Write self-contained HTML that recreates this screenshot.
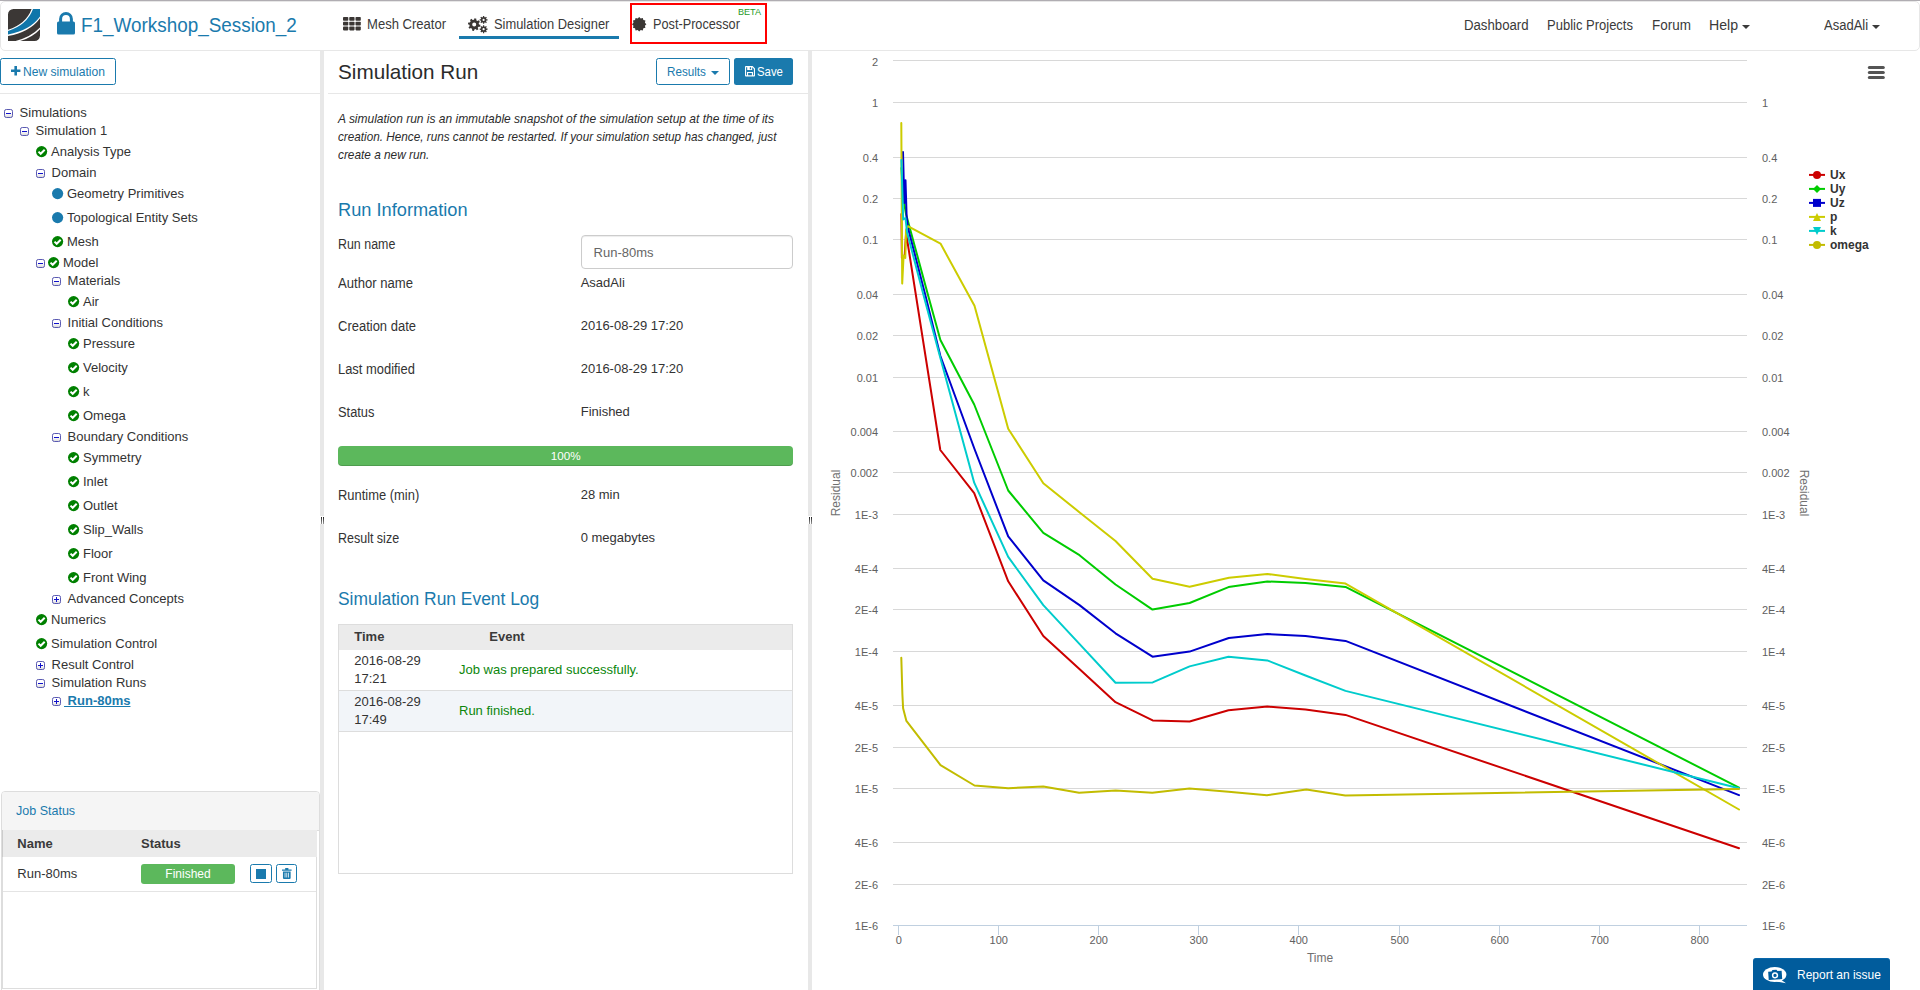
<!DOCTYPE html>
<html><head><meta charset="utf-8"><title>SimScale</title><style>
*{box-sizing:border-box;margin:0;padding:0}
html,body{width:1920px;height:990px;overflow:hidden;background:#fff}
body{font-family:"Liberation Sans",sans-serif;font-size:13px;color:#333;position:relative}
.t{position:absolute;white-space:nowrap;display:block}
.b{position:absolute}
svg{position:absolute;overflow:visible}
</style></head><body>
<div class="b" style="left:0px;top:0px;width:1920px;height:1px;background:#b0adb2"></div>
<div class="b" style="left:0px;top:1px;width:1920px;height:50px;border:1px solid #e7e7e7;border-radius:5px;background:#fff"></div>
<svg style="left:8px;top:9px" width="32" height="32" viewBox="0 0 32 32">
<defs><clipPath id="lg"><path d="M5.5,0 H32 V26.5 A5.5,5.5 0 0 1 26.5,32 H0 V5.5 A5.5,5.5 0 0 1 5.5,0 Z"/></clipPath></defs>
<g clip-path="url(#lg)"><rect width="32" height="32" fill="#3b3735"/>
<path d="M23.6,0 L32,0 L32,9.2 Q22,23 0,27 L0,20.8 Q18,15 23.6,0 Z" fill="#fff"/>
<path d="M25,0 L32,0 L32,7.6 Q22,21.5 0,25.6 L0,22 Q19,16 25,0 Z" fill="#0f76aa"/>
<path d="M32,18.6 Q22,29 5,32.6 L10,32.6 Q24,29 32,20.2 Z" fill="#fff"/>
</g></svg>
<svg style="left:57px;top:11.5px" width="18" height="22.5" viewBox="0 0 18 22.5">
<path d="M3.6,10 V7 a5.4,5.4 0 0 1 10.8,0 V10" fill="none" stroke="#1a7aad" stroke-width="3"/>
<rect x="0" y="9.6" width="18" height="12.9" rx="1.6" fill="#1a7aad"/></svg>
<span id="t1" class="t " style="left:81.3045px;top:11.7px;font-size:20px;line-height:26px;color:#1a7aad;transform:scaleX(0.9440);transform-origin:0 50%;">F1_Workshop_Session_2</span>
<svg style="left:342.5px;top:17.3px" width="18" height="14" viewBox="0 0 18 14"><rect x="0" y="0" width="5.3" height="3.8" rx="0.8" fill="#3b3735"/><rect x="6.25" y="0" width="5.3" height="3.8" rx="0.8" fill="#3b3735"/><rect x="12.5" y="0" width="5.3" height="3.8" rx="0.8" fill="#3b3735"/><rect x="0" y="4.8" width="5.3" height="3.8" rx="0.8" fill="#3b3735"/><rect x="6.25" y="4.8" width="5.3" height="3.8" rx="0.8" fill="#3b3735"/><rect x="12.5" y="4.8" width="5.3" height="3.8" rx="0.8" fill="#3b3735"/><rect x="0" y="9.6" width="5.3" height="3.8" rx="0.8" fill="#3b3735"/><rect x="6.25" y="9.6" width="5.3" height="3.8" rx="0.8" fill="#3b3735"/><rect x="12.5" y="9.6" width="5.3" height="3.8" rx="0.8" fill="#3b3735"/></svg>
<span id="t2" class="t " style="left:366.852px;top:14.1px;font-size:14px;line-height:20px;color:#3a3a3a;transform:scaleX(0.9327);transform-origin:0 50%;">Mesh Creator</span>
<svg style="left:468px;top:16px" width="20" height="17" viewBox="0 0 20 17"><path d="M11.00,8.43 L12.49,8.87 L12.10,10.80 L10.55,10.63 L9.71,11.87 L10.46,13.24 L8.82,14.33 L7.84,13.11 L6.37,13.40 L5.93,14.89 L4.00,14.50 L4.17,12.95 L2.93,12.11 L1.56,12.86 L0.47,11.22 L1.69,10.24 L1.40,8.77 L-0.09,8.33 L0.30,6.40 L1.85,6.57 L2.69,5.33 L1.94,3.96 L3.58,2.87 L4.56,4.09 L6.03,3.80 L6.47,2.31 L8.40,2.70 L8.23,4.25 L9.47,5.09 L10.84,4.34 L11.93,5.98 L10.71,6.96 Z M4.20,8.60 a2.00,2.00 0 1 0 4.00,0 a2.00,2.00 0 1 0 -4.00,0 Z" fill="#3b3735" fill-rule="evenodd"/><path d="M18.42,3.22 L19.55,3.27 L19.55,4.53 L18.42,4.58 L18.07,5.42 L18.84,6.25 L17.95,7.14 L17.12,6.37 L16.28,6.72 L16.23,7.85 L14.97,7.85 L14.92,6.72 L14.08,6.37 L13.25,7.14 L12.36,6.25 L13.13,5.42 L12.78,4.58 L11.65,4.53 L11.65,3.27 L12.78,3.22 L13.13,2.38 L12.36,1.55 L13.25,0.66 L14.08,1.43 L14.92,1.08 L14.97,-0.05 L16.23,-0.05 L16.28,1.08 L17.12,1.43 L17.95,0.66 L18.84,1.55 L18.07,2.38 Z M14.50,3.90 a1.10,1.10 0 1 0 2.20,0 a1.10,1.10 0 1 0 -2.20,0 Z" fill="#3b3735" fill-rule="evenodd"/><path d="M18.42,12.52 L19.55,12.57 L19.55,13.83 L18.42,13.88 L18.07,14.72 L18.84,15.55 L17.95,16.44 L17.12,15.67 L16.28,16.02 L16.23,17.15 L14.97,17.15 L14.92,16.02 L14.08,15.67 L13.25,16.44 L12.36,15.55 L13.13,14.72 L12.78,13.88 L11.65,13.83 L11.65,12.57 L12.78,12.52 L13.13,11.68 L12.36,10.85 L13.25,9.96 L14.08,10.73 L14.92,10.38 L14.97,9.25 L16.23,9.25 L16.28,10.38 L17.12,10.73 L17.95,9.96 L18.84,10.85 L18.07,11.68 Z M14.50,13.20 a1.10,1.10 0 1 0 2.20,0 a1.10,1.10 0 1 0 -2.20,0 Z" fill="#3b3735" fill-rule="evenodd"/></svg>
<span id="t3" class="t " style="left:493.767px;top:14.1px;font-size:14px;line-height:20px;color:#3a3a3a;transform:scaleX(0.9208);transform-origin:0 50%;">Simulation Designer</span>
<div class="b" style="left:459px;top:36px;width:160px;height:3px;background:#1a7aad"></div>
<div class="b" style="left:630px;top:3px;width:137px;height:41px;border:2px solid #ff0000"></div>
<svg style="left:632.2px;top:17.4px" width="14.4" height="14.4" viewBox="0 0 14.4 14.4"><polygon points="14.40,7.20 12.90,8.73 13.44,10.80 11.37,11.37 10.80,13.44 8.73,12.90 7.20,14.40 5.67,12.90 3.60,13.44 3.03,11.37 0.96,10.80 1.50,8.73 0.00,7.20 1.50,5.67 0.96,3.60 3.03,3.03 3.60,0.96 5.67,1.50 7.20,0.00 8.73,1.50 10.80,0.96 11.37,3.03 13.44,3.60 12.90,5.67" fill="#3b3735"/></svg>
<span id="t4" class="t " style="left:653.38px;top:14.1px;font-size:14px;line-height:20px;color:#3a3a3a;transform:scaleX(0.9078);transform-origin:0 50%;">Post-Processor</span>
<span id="t5" class="t " style="left:737.931px;top:5.7px;font-size:9px;line-height:12px;color:#1f9a1f;transform:scaleX(1.0094);transform-origin:0 50%;">BETA</span>
<span id="t6" class="t " style="left:1463.94px;top:15px;font-size:14px;line-height:20px;color:#3a3a3a;transform:scaleX(0.9429);transform-origin:0 50%;">Dashboard</span>
<span id="t7" class="t " style="left:1547.16px;top:15px;font-size:14px;line-height:20px;color:#3a3a3a;transform:scaleX(0.9284);transform-origin:0 50%;">Public Projects</span>
<span id="t8" class="t " style="left:1651.72px;top:15px;font-size:14px;line-height:20px;color:#3a3a3a;transform:scaleX(0.9621);transform-origin:0 50%;">Forum</span>
<span id="t9" class="t " style="left:1709.16px;top:15px;font-size:14px;line-height:20px;color:#3a3a3a;transform:scaleX(1.0108);transform-origin:0 50%;">Help</span>
<svg style="left:1742px;top:25px" width="8" height="4"><path d="M0,0 H8 L4,4 Z" fill="#3a3a3a"/></svg>
<span id="t10" class="t " style="left:1823.85px;top:15px;font-size:14px;line-height:20px;color:#3a3a3a;transform:scaleX(0.9294);transform-origin:0 50%;">AsadAli</span>
<svg style="left:1872.4px;top:25px" width="8" height="4"><path d="M0,0 H8 L4,4 Z" fill="#3a3a3a"/></svg>
<div class="b" style="left:320px;top:51px;width:4px;height:939px;background:#e8e8e8"></div>
<div class="b" style="left:808px;top:51px;width:4px;height:939px;background:#e8e8e8"></div>
<div class="b" style="left:320px;top:516px;width:4px;height:8px;background:#fff"></div>
<div class="b" style="left:321px;top:517px;width:1px;height:7px;background:linear-gradient(#222,#999)"></div>
<div class="b" style="left:323px;top:517px;width:1px;height:7px;background:linear-gradient(#222,#999)"></div>
<div class="b" style="left:808px;top:516px;width:4px;height:8px;background:#fff"></div>
<div class="b" style="left:809px;top:517px;width:1px;height:7px;background:linear-gradient(#222,#999)"></div>
<div class="b" style="left:811px;top:517px;width:1px;height:7px;background:linear-gradient(#222,#999)"></div>
<div class="b" style="left:0px;top:93px;width:320px;height:1px;background:#e7e7e7"></div>
<div class="b" style="left:0px;top:58px;width:116px;height:27px;border:1px solid #1a7aad;border-radius:2.5px;background:#fff"></div>
<svg style="left:11px;top:66.4px" width="9.4" height="9.4"><path d="M3.4,0 H6 V3.4 H9.4 V6 H6 V9.4 H3.4 V6 H0 V3.4 H3.4 Z" fill="#1a7aad"/></svg>
<span id="t11" class="t " style="left:22.684px;top:62.8px;font-size:13px;line-height:18px;color:#1a7aad;transform:scaleX(0.9302);transform-origin:0 50%;">New simulation</span>
<svg style="left:4px;top:109px" width="9" height="9" viewBox="0 0 9 9"><defs><linearGradient id="tg" x1="0" y1="0" x2="0" y2="1"><stop offset="0.45" stop-color="#fff"/><stop offset="1" stop-color="#d8d8d8"/></linearGradient></defs><rect x="0.5" y="0.5" width="8" height="8" rx="1.8" fill="url(#tg)" stroke="#5a5ab2" stroke-width="1"/><rect x="2" y="4" width="5" height="1" fill="#1010cc"/></svg>
<span id="t12" class="t " style="left:19.6px;top:103.5px;font-size:13px;line-height:18px;color:#333;">Simulations</span>
<svg style="left:20px;top:127px" width="9" height="9" viewBox="0 0 9 9"><defs><linearGradient id="tg" x1="0" y1="0" x2="0" y2="1"><stop offset="0.45" stop-color="#fff"/><stop offset="1" stop-color="#d8d8d8"/></linearGradient></defs><rect x="0.5" y="0.5" width="8" height="8" rx="1.8" fill="url(#tg)" stroke="#5a5ab2" stroke-width="1"/><rect x="2" y="4" width="5" height="1" fill="#1010cc"/></svg>
<span id="t13" class="t " style="left:35.6px;top:121.5px;font-size:13px;line-height:18px;color:#333;">Simulation 1</span>
<svg style="left:36px;top:145.7px" width="11.2" height="11.2" viewBox="0 0 11.2 11.2"><circle cx="5.6" cy="5.6" r="5.6" fill="#008000"/><path d="M2.5,5.6 L4.7,7.8 L8.7,3.8" fill="none" stroke="#fff" stroke-width="2"/></svg>
<span id="t14" class="t " style="left:51px;top:142.5px;font-size:13px;line-height:18px;color:#333;">Analysis Type</span>
<svg style="left:36px;top:169px" width="9" height="9" viewBox="0 0 9 9"><defs><linearGradient id="tg" x1="0" y1="0" x2="0" y2="1"><stop offset="0.45" stop-color="#fff"/><stop offset="1" stop-color="#d8d8d8"/></linearGradient></defs><rect x="0.5" y="0.5" width="8" height="8" rx="1.8" fill="url(#tg)" stroke="#5a5ab2" stroke-width="1"/><rect x="2" y="4" width="5" height="1" fill="#1010cc"/></svg>
<span id="t15" class="t " style="left:51.6px;top:163.5px;font-size:13px;line-height:18px;color:#333;">Domain</span>
<svg style="left:52px;top:187.7px" width="11.2" height="11.2"><circle cx="5.6" cy="5.6" r="5.6" fill="#1a7aad"/></svg>
<span id="t16" class="t " style="left:67px;top:184.5px;font-size:13px;line-height:18px;color:#333;">Geometry Primitives</span>
<svg style="left:52px;top:211.7px" width="11.2" height="11.2"><circle cx="5.6" cy="5.6" r="5.6" fill="#1a7aad"/></svg>
<span id="t17" class="t " style="left:67px;top:208.5px;font-size:13px;line-height:18px;color:#333;">Topological Entity Sets</span>
<svg style="left:52px;top:235.7px" width="11.2" height="11.2" viewBox="0 0 11.2 11.2"><circle cx="5.6" cy="5.6" r="5.6" fill="#008000"/><path d="M2.5,5.6 L4.7,7.8 L8.7,3.8" fill="none" stroke="#fff" stroke-width="2"/></svg>
<span id="t18" class="t " style="left:67px;top:232.5px;font-size:13px;line-height:18px;color:#333;">Mesh</span>
<svg style="left:36px;top:259px" width="9" height="9" viewBox="0 0 9 9"><defs><linearGradient id="tg" x1="0" y1="0" x2="0" y2="1"><stop offset="0.45" stop-color="#fff"/><stop offset="1" stop-color="#d8d8d8"/></linearGradient></defs><rect x="0.5" y="0.5" width="8" height="8" rx="1.8" fill="url(#tg)" stroke="#5a5ab2" stroke-width="1"/><rect x="2" y="4" width="5" height="1" fill="#1010cc"/></svg>
<svg style="left:48px;top:256.7px" width="11.2" height="11.2" viewBox="0 0 11.2 11.2"><circle cx="5.6" cy="5.6" r="5.6" fill="#008000"/><path d="M2.5,5.6 L4.7,7.8 L8.7,3.8" fill="none" stroke="#fff" stroke-width="2"/></svg>
<span id="t19" class="t " style="left:63px;top:253.5px;font-size:13px;line-height:18px;color:#333;">Model</span>
<svg style="left:52px;top:277px" width="9" height="9" viewBox="0 0 9 9"><defs><linearGradient id="tg" x1="0" y1="0" x2="0" y2="1"><stop offset="0.45" stop-color="#fff"/><stop offset="1" stop-color="#d8d8d8"/></linearGradient></defs><rect x="0.5" y="0.5" width="8" height="8" rx="1.8" fill="url(#tg)" stroke="#5a5ab2" stroke-width="1"/><rect x="2" y="4" width="5" height="1" fill="#1010cc"/></svg>
<span id="t20" class="t " style="left:67.6px;top:271.5px;font-size:13px;line-height:18px;color:#333;">Materials</span>
<svg style="left:68px;top:295.7px" width="11.2" height="11.2" viewBox="0 0 11.2 11.2"><circle cx="5.6" cy="5.6" r="5.6" fill="#008000"/><path d="M2.5,5.6 L4.7,7.8 L8.7,3.8" fill="none" stroke="#fff" stroke-width="2"/></svg>
<span id="t21" class="t " style="left:83px;top:292.5px;font-size:13px;line-height:18px;color:#333;">Air</span>
<svg style="left:52px;top:319px" width="9" height="9" viewBox="0 0 9 9"><defs><linearGradient id="tg" x1="0" y1="0" x2="0" y2="1"><stop offset="0.45" stop-color="#fff"/><stop offset="1" stop-color="#d8d8d8"/></linearGradient></defs><rect x="0.5" y="0.5" width="8" height="8" rx="1.8" fill="url(#tg)" stroke="#5a5ab2" stroke-width="1"/><rect x="2" y="4" width="5" height="1" fill="#1010cc"/></svg>
<span id="t22" class="t " style="left:67.6px;top:313.5px;font-size:13px;line-height:18px;color:#333;">Initial Conditions</span>
<svg style="left:68px;top:337.7px" width="11.2" height="11.2" viewBox="0 0 11.2 11.2"><circle cx="5.6" cy="5.6" r="5.6" fill="#008000"/><path d="M2.5,5.6 L4.7,7.8 L8.7,3.8" fill="none" stroke="#fff" stroke-width="2"/></svg>
<span id="t23" class="t " style="left:83px;top:334.5px;font-size:13px;line-height:18px;color:#333;">Pressure</span>
<svg style="left:68px;top:361.7px" width="11.2" height="11.2" viewBox="0 0 11.2 11.2"><circle cx="5.6" cy="5.6" r="5.6" fill="#008000"/><path d="M2.5,5.6 L4.7,7.8 L8.7,3.8" fill="none" stroke="#fff" stroke-width="2"/></svg>
<span id="t24" class="t " style="left:83px;top:358.5px;font-size:13px;line-height:18px;color:#333;">Velocity</span>
<svg style="left:68px;top:385.7px" width="11.2" height="11.2" viewBox="0 0 11.2 11.2"><circle cx="5.6" cy="5.6" r="5.6" fill="#008000"/><path d="M2.5,5.6 L4.7,7.8 L8.7,3.8" fill="none" stroke="#fff" stroke-width="2"/></svg>
<span id="t25" class="t " style="left:83px;top:382.5px;font-size:13px;line-height:18px;color:#333;">k</span>
<svg style="left:68px;top:409.7px" width="11.2" height="11.2" viewBox="0 0 11.2 11.2"><circle cx="5.6" cy="5.6" r="5.6" fill="#008000"/><path d="M2.5,5.6 L4.7,7.8 L8.7,3.8" fill="none" stroke="#fff" stroke-width="2"/></svg>
<span id="t26" class="t " style="left:83px;top:406.5px;font-size:13px;line-height:18px;color:#333;">Omega</span>
<svg style="left:52px;top:433px" width="9" height="9" viewBox="0 0 9 9"><defs><linearGradient id="tg" x1="0" y1="0" x2="0" y2="1"><stop offset="0.45" stop-color="#fff"/><stop offset="1" stop-color="#d8d8d8"/></linearGradient></defs><rect x="0.5" y="0.5" width="8" height="8" rx="1.8" fill="url(#tg)" stroke="#5a5ab2" stroke-width="1"/><rect x="2" y="4" width="5" height="1" fill="#1010cc"/></svg>
<span id="t27" class="t " style="left:67.6px;top:427.5px;font-size:13px;line-height:18px;color:#333;">Boundary Conditions</span>
<svg style="left:68px;top:451.7px" width="11.2" height="11.2" viewBox="0 0 11.2 11.2"><circle cx="5.6" cy="5.6" r="5.6" fill="#008000"/><path d="M2.5,5.6 L4.7,7.8 L8.7,3.8" fill="none" stroke="#fff" stroke-width="2"/></svg>
<span id="t28" class="t " style="left:83px;top:448.5px;font-size:13px;line-height:18px;color:#333;">Symmetry</span>
<svg style="left:68px;top:475.7px" width="11.2" height="11.2" viewBox="0 0 11.2 11.2"><circle cx="5.6" cy="5.6" r="5.6" fill="#008000"/><path d="M2.5,5.6 L4.7,7.8 L8.7,3.8" fill="none" stroke="#fff" stroke-width="2"/></svg>
<span id="t29" class="t " style="left:83px;top:472.5px;font-size:13px;line-height:18px;color:#333;">Inlet</span>
<svg style="left:68px;top:499.7px" width="11.2" height="11.2" viewBox="0 0 11.2 11.2"><circle cx="5.6" cy="5.6" r="5.6" fill="#008000"/><path d="M2.5,5.6 L4.7,7.8 L8.7,3.8" fill="none" stroke="#fff" stroke-width="2"/></svg>
<span id="t30" class="t " style="left:83px;top:496.5px;font-size:13px;line-height:18px;color:#333;">Outlet</span>
<svg style="left:68px;top:523.7px" width="11.2" height="11.2" viewBox="0 0 11.2 11.2"><circle cx="5.6" cy="5.6" r="5.6" fill="#008000"/><path d="M2.5,5.6 L4.7,7.8 L8.7,3.8" fill="none" stroke="#fff" stroke-width="2"/></svg>
<span id="t31" class="t " style="left:83px;top:520.5px;font-size:13px;line-height:18px;color:#333;">Slip_Walls</span>
<svg style="left:68px;top:547.7px" width="11.2" height="11.2" viewBox="0 0 11.2 11.2"><circle cx="5.6" cy="5.6" r="5.6" fill="#008000"/><path d="M2.5,5.6 L4.7,7.8 L8.7,3.8" fill="none" stroke="#fff" stroke-width="2"/></svg>
<span id="t32" class="t " style="left:83px;top:544.5px;font-size:13px;line-height:18px;color:#333;">Floor</span>
<svg style="left:68px;top:571.7px" width="11.2" height="11.2" viewBox="0 0 11.2 11.2"><circle cx="5.6" cy="5.6" r="5.6" fill="#008000"/><path d="M2.5,5.6 L4.7,7.8 L8.7,3.8" fill="none" stroke="#fff" stroke-width="2"/></svg>
<span id="t33" class="t " style="left:83px;top:568.5px;font-size:13px;line-height:18px;color:#333;">Front Wing</span>
<svg style="left:52px;top:595px" width="9" height="9" viewBox="0 0 9 9"><defs><linearGradient id="tg" x1="0" y1="0" x2="0" y2="1"><stop offset="0.45" stop-color="#fff"/><stop offset="1" stop-color="#d8d8d8"/></linearGradient></defs><rect x="0.5" y="0.5" width="8" height="8" rx="1.8" fill="url(#tg)" stroke="#5a5ab2" stroke-width="1"/><rect x="2" y="4" width="5" height="1" fill="#1010cc"/><rect x="4" y="2" width="1" height="5" fill="#1010cc"/></svg>
<span id="t34" class="t " style="left:67.6px;top:589.5px;font-size:13px;line-height:18px;color:#333;">Advanced Concepts</span>
<svg style="left:36px;top:613.7px" width="11.2" height="11.2" viewBox="0 0 11.2 11.2"><circle cx="5.6" cy="5.6" r="5.6" fill="#008000"/><path d="M2.5,5.6 L4.7,7.8 L8.7,3.8" fill="none" stroke="#fff" stroke-width="2"/></svg>
<span id="t35" class="t " style="left:51px;top:610.5px;font-size:13px;line-height:18px;color:#333;">Numerics</span>
<svg style="left:36px;top:637.7px" width="11.2" height="11.2" viewBox="0 0 11.2 11.2"><circle cx="5.6" cy="5.6" r="5.6" fill="#008000"/><path d="M2.5,5.6 L4.7,7.8 L8.7,3.8" fill="none" stroke="#fff" stroke-width="2"/></svg>
<span id="t36" class="t " style="left:51px;top:634.5px;font-size:13px;line-height:18px;color:#333;">Simulation Control</span>
<svg style="left:36px;top:661px" width="9" height="9" viewBox="0 0 9 9"><defs><linearGradient id="tg" x1="0" y1="0" x2="0" y2="1"><stop offset="0.45" stop-color="#fff"/><stop offset="1" stop-color="#d8d8d8"/></linearGradient></defs><rect x="0.5" y="0.5" width="8" height="8" rx="1.8" fill="url(#tg)" stroke="#5a5ab2" stroke-width="1"/><rect x="2" y="4" width="5" height="1" fill="#1010cc"/><rect x="4" y="2" width="1" height="5" fill="#1010cc"/></svg>
<span id="t37" class="t " style="left:51.6px;top:655.5px;font-size:13px;line-height:18px;color:#333;">Result Control</span>
<svg style="left:36px;top:679px" width="9" height="9" viewBox="0 0 9 9"><defs><linearGradient id="tg" x1="0" y1="0" x2="0" y2="1"><stop offset="0.45" stop-color="#fff"/><stop offset="1" stop-color="#d8d8d8"/></linearGradient></defs><rect x="0.5" y="0.5" width="8" height="8" rx="1.8" fill="url(#tg)" stroke="#5a5ab2" stroke-width="1"/><rect x="2" y="4" width="5" height="1" fill="#1010cc"/></svg>
<span id="t38" class="t " style="left:51.6px;top:673.5px;font-size:13px;line-height:18px;color:#333;">Simulation Runs</span>
<svg style="left:52px;top:697px" width="9" height="9" viewBox="0 0 9 9"><defs><linearGradient id="tg" x1="0" y1="0" x2="0" y2="1"><stop offset="0.45" stop-color="#fff"/><stop offset="1" stop-color="#d8d8d8"/></linearGradient></defs><rect x="0.5" y="0.5" width="8" height="8" rx="1.8" fill="url(#tg)" stroke="#5a5ab2" stroke-width="1"/><rect x="2" y="4" width="5" height="1" fill="#1010cc"/><rect x="4" y="2" width="1" height="5" fill="#1010cc"/></svg>
<span id="t39" class="t " style="left:64px;top:691.5px;font-size:13px;line-height:18px;color:#1a7aad;font-weight:bold;text-decoration:underline;">&nbsp;Run-80ms</span>
<div class="b" style="left:1px;top:791px;width:318.5px;height:200px;border:1px solid #ddd;border-radius:4px 4px 0 0;background:#fff"></div>
<div class="b" style="left:2px;top:792px;width:316.5px;height:38.5px;background:#f5f5f5;border-radius:3px 3px 0 0;border-bottom:1px solid #ddd"></div>
<span id="t40" class="t " style="left:16.3584px;top:802.1px;font-size:13px;line-height:18px;color:#1a7aad;transform:scaleX(0.9626);transform-origin:0 50%;">Job Status</span>
<div class="b" style="left:2px;top:830px;width:315px;height:159px;border:1px solid #ddd;border-top:none;background:#fff"></div>
<div class="b" style="left:2px;top:830px;width:315px;height:27px;background:#ebebeb;border-left:1px solid #ccc"></div>
<span id="t41" class="t " style="left:17.3px;top:834.7px;font-size:13px;line-height:18px;color:#3a3a3a;font-weight:bold;">Name</span>
<span id="t42" class="t " style="left:141px;top:834.7px;font-size:13px;line-height:18px;color:#3a3a3a;font-weight:bold;">Status</span>
<span id="t43" class="t " style="left:17.3px;top:864.6px;font-size:13px;line-height:18px;color:#333;">Run-80ms</span>
<div class="b" style="left:3px;top:891px;width:313px;height:1px;background:#e4e4e4"></div>
<div class="b" style="left:141px;top:864px;width:94px;height:20px;background:#5cb85c;border-radius:3px"></div>
<span id="t44" class="t " style="left:188px;transform:translateX(-50%);top:866px;font-size:12px;line-height:16px;color:#fff;">Finished</span>
<div class="b" style="left:250px;top:864px;width:22px;height:19px;border:1px solid #1a7aad;border-radius:2.5px;background:#fff"></div>
<div class="b" style="left:256px;top:868.8px;width:10.2px;height:10px;background:#1a7aad"></div>
<div class="b" style="left:276px;top:864px;width:21px;height:19px;border:1px solid #1a7aad;border-radius:2.5px;background:#fff"></div>
<svg style="left:282.1px;top:868px" width="9.6" height="11" viewBox="0 0 9 10.4" preserveAspectRatio="none">
<path d="M0,1.4 H9 V2.6 H0 Z M3,0 H6 V1.4 H3 Z" fill="#1a7aad"/>
<path d="M0.9,3.2 H8.1 V9.4 Q8.1,10.4 7.1,10.4 H1.9 Q0.9,10.4 0.9,9.4 Z M2.5,4.4 V9 H3.2 V4.4 Z M4.15,4.4 V9 H4.85 V4.4 Z M5.8,4.4 V9 H6.5 V4.4 Z" fill="#1a7aad" fill-rule="evenodd"/></svg>
<span id="t45" class="t " style="left:337.558px;top:57.5px;font-size:21px;line-height:28px;color:#2b2b2b;transform:scaleX(0.9852);transform-origin:0 50%;">Simulation Run</span>
<div class="b" style="left:656px;top:58px;width:74px;height:27px;border:1px solid #1a7aad;border-radius:2.5px;background:#fff"></div>
<span id="t46" class="t " style="left:666.62px;top:62.5px;font-size:13px;line-height:18px;color:#1a7aad;transform:scaleX(0.8976);transform-origin:0 50%;">Results</span>
<svg style="left:711px;top:70.5px" width="8" height="4"><path d="M0,0 H8 L4,4 Z" fill="#1a7aad"/></svg>
<div class="b" style="left:734px;top:58px;width:59px;height:27px;border-radius:2.5px;background:#1a7aad"></div>
<svg style="left:744.8px;top:66.2px" width="10" height="10.5" viewBox="0 0 10 10" preserveAspectRatio="none">
<path d="M0.9,0 H7.6 L10,2.4 V9.1 Q10,10 9.1,10 H0.9 Q0,10 0,9.1 V0.9 Q0,0 0.9,0 Z M1.1,1.1 V8.9 H2 V5.6 H8 V8.9 H8.9 V2.9 L7.2,1.1 V3.9 H2.2 V1.1 Z M3.1,6.7 V8.9 H6.9 V6.7 Z M4.8,1.1 V3 H6.1 V1.1 Z" fill="#fff" fill-rule="evenodd"/></svg>
<span id="t47" class="t " style="left:756.652px;top:62.5px;font-size:13px;line-height:18px;color:#fff;transform:scaleX(0.8747);transform-origin:0 50%;">Save</span>
<div class="b" style="left:328px;top:93px;width:480px;height:1px;background:#e7e7e7"></div>
<span id="t48" class="t " style="left:337.913px;top:109.6px;font-size:13px;line-height:18px;color:#2b2b2b;font-style:italic;transform:scaleX(0.9220);transform-origin:0 50%;">A simulation run is an immutable snapshot of the simulation setup at the time of its</span>
<span id="t49" class="t " style="left:337.773px;top:127.6px;font-size:13px;line-height:18px;color:#2b2b2b;font-style:italic;transform:scaleX(0.9028);transform-origin:0 50%;">creation. Hence, runs cannot be restarted. If your simulation setup has changed, just</span>
<span id="t50" class="t " style="left:337.772px;top:145.6px;font-size:13px;line-height:18px;color:#2b2b2b;font-style:italic;transform:scaleX(0.9100);transform-origin:0 50%;">create a new run.</span>
<span id="t51" class="t " style="left:338.132px;top:197.5px;font-size:18px;line-height:24px;color:#1a7aad;transform:scaleX(1.0122);transform-origin:0 50%;">Run Information</span>
<span id="t52" class="t " style="left:337.704px;top:234.3px;font-size:14px;line-height:20px;color:#333;transform:scaleX(0.8868);transform-origin:0 50%;">Run name</span>
<span id="t53" class="t " style="left:337.649px;top:273.2px;font-size:14px;line-height:20px;color:#333;transform:scaleX(0.9362);transform-origin:0 50%;">Author name</span>
<span id="t54" class="t " style="left:580.7px;top:273.6px;font-size:13px;line-height:18px;color:#333;">AsadAli</span>
<span id="t55" class="t " style="left:338.02px;top:316.3px;font-size:14px;line-height:20px;color:#333;transform:scaleX(0.9277);transform-origin:0 50%;">Creation date</span>
<span id="t56" class="t " style="left:580.7px;top:316.6px;font-size:13px;line-height:18px;color:#333;">2016-08-29 17:20</span>
<span id="t57" class="t " style="left:337.563px;top:359.2px;font-size:14px;line-height:20px;color:#333;transform:scaleX(0.9228);transform-origin:0 50%;">Last modified</span>
<span id="t58" class="t " style="left:580.7px;top:359.7px;font-size:13px;line-height:18px;color:#333;">2016-08-29 17:20</span>
<span id="t59" class="t " style="left:337.971px;top:402.1px;font-size:14px;line-height:20px;color:#333;transform:scaleX(0.9176);transform-origin:0 50%;">Status</span>
<span id="t60" class="t " style="left:580.7px;top:402.6px;font-size:13px;line-height:18px;color:#333;">Finished</span>
<span id="t61" class="t " style="left:337.662px;top:485.1px;font-size:14px;line-height:20px;color:#333;transform:scaleX(0.9242);transform-origin:0 50%;">Runtime (min)</span>
<span id="t62" class="t " style="left:580.7px;top:485.6px;font-size:13px;line-height:18px;color:#333;">28 min</span>
<span id="t63" class="t " style="left:337.698px;top:528.2px;font-size:14px;line-height:20px;color:#333;transform:scaleX(0.8921);transform-origin:0 50%;">Result size</span>
<span id="t64" class="t " style="left:580.7px;top:528.6px;font-size:13px;line-height:18px;color:#333;">0 megabytes</span>
<div class="b" style="left:581px;top:235px;width:212px;height:34px;border:1px solid #ccc;border-radius:4px;background:#fff;box-shadow:inset 0 1px 1px rgba(0,0,0,0.075)"></div>
<span id="t65" class="t " style="left:593.6px;top:243.6px;font-size:13px;line-height:18px;color:#666;">Run-80ms</span>
<div class="b" style="left:338px;top:446px;width:455px;height:20px;background:#5cb85c;border-radius:4px;box-shadow:inset 0 -1px 0 rgba(0,0,0,0.15)"></div>
<span id="t66" class="t " style="left:565.6px;transform:translateX(-50%);top:448.2px;font-size:11.7px;line-height:16px;color:#fff;">100%</span>
<span id="t67" class="t " style="left:337.544px;top:586.5px;font-size:18px;line-height:24px;color:#1a7aad;transform:scaleX(0.9668);transform-origin:0 50%;">Simulation Run Event Log</span>
<div class="b" style="left:338px;top:624px;width:455px;height:249.5px;border:1px solid #ddd;background:#fff"></div>
<div class="b" style="left:339px;top:625px;width:453px;height:25px;background:#ebebeb"></div>
<span id="t68" class="t " style="left:354.3px;top:628px;font-size:13px;line-height:18px;color:#3a3a3a;font-weight:bold;">Time</span>
<span id="t69" class="t " style="left:489.3px;top:628px;font-size:13px;line-height:18px;color:#3a3a3a;font-weight:bold;">Event</span>
<div class="b" style="left:339px;top:690px;width:453px;height:1px;background:#ddd"></div>
<div class="b" style="left:339px;top:691px;width:453px;height:40px;background:#f2f5f9"></div>
<div class="b" style="left:339px;top:731px;width:453px;height:1px;background:#ddd"></div>
<span id="t70" class="t " style="left:354.3px;top:651.9px;font-size:13px;line-height:18px;color:#333;">2016-08-29</span>
<span id="t71" class="t " style="left:354.3px;top:669.9px;font-size:13px;line-height:18px;color:#333;">17:21</span>
<span id="t72" class="t " style="left:459px;top:660.9px;font-size:13px;line-height:18px;color:#0c860c;">Job was prepared successfully.</span>
<span id="t73" class="t " style="left:354.3px;top:692.9px;font-size:13px;line-height:18px;color:#333;">2016-08-29</span>
<span id="t74" class="t " style="left:354.3px;top:710.9px;font-size:13px;line-height:18px;color:#333;">17:49</span>
<span id="t75" class="t " style="left:459px;top:701.9px;font-size:13px;line-height:18px;color:#0c860c;">Run finished.</span>
<div class="b" style="left:893px;top:60px;width:854px;height:1px;background:#d8d8d8"></div>
<span id="t76" class="t " style="right:1041.9px;top:55.4px;font-size:11px;line-height:14px;color:#606060;">2</span>
<div class="b" style="left:893px;top:102px;width:854px;height:1px;background:#d8d8d8"></div>
<span id="t77" class="t " style="right:1041.9px;top:96.4px;font-size:11px;line-height:14px;color:#606060;">1</span>
<span id="t78" class="t " style="left:1762px;top:96.4px;font-size:11px;line-height:14px;color:#606060;">1</span>
<div class="b" style="left:893px;top:157px;width:854px;height:1px;background:#d8d8d8"></div>
<span id="t79" class="t " style="right:1041.9px;top:151.4px;font-size:11px;line-height:14px;color:#606060;">0.4</span>
<span id="t80" class="t " style="left:1762px;top:151.4px;font-size:11px;line-height:14px;color:#606060;">0.4</span>
<div class="b" style="left:893px;top:198px;width:854px;height:1px;background:#d8d8d8"></div>
<span id="t81" class="t " style="right:1041.9px;top:192.4px;font-size:11px;line-height:14px;color:#606060;">0.2</span>
<span id="t82" class="t " style="left:1762px;top:192.4px;font-size:11px;line-height:14px;color:#606060;">0.2</span>
<div class="b" style="left:893px;top:239px;width:854px;height:1px;background:#d8d8d8"></div>
<span id="t83" class="t " style="right:1041.9px;top:233.4px;font-size:11px;line-height:14px;color:#606060;">0.1</span>
<span id="t84" class="t " style="left:1762px;top:233.4px;font-size:11px;line-height:14px;color:#606060;">0.1</span>
<div class="b" style="left:893px;top:294px;width:854px;height:1px;background:#d8d8d8"></div>
<span id="t85" class="t " style="right:1041.9px;top:288.4px;font-size:11px;line-height:14px;color:#606060;">0.04</span>
<span id="t86" class="t " style="left:1762px;top:288.4px;font-size:11px;line-height:14px;color:#606060;">0.04</span>
<div class="b" style="left:893px;top:335px;width:854px;height:1px;background:#d8d8d8"></div>
<span id="t87" class="t " style="right:1041.9px;top:329.4px;font-size:11px;line-height:14px;color:#606060;">0.02</span>
<span id="t88" class="t " style="left:1762px;top:329.4px;font-size:11px;line-height:14px;color:#606060;">0.02</span>
<div class="b" style="left:893px;top:377px;width:854px;height:1px;background:#d8d8d8"></div>
<span id="t89" class="t " style="right:1041.9px;top:371.4px;font-size:11px;line-height:14px;color:#606060;">0.01</span>
<span id="t90" class="t " style="left:1762px;top:371.4px;font-size:11px;line-height:14px;color:#606060;">0.01</span>
<div class="b" style="left:893px;top:431px;width:854px;height:1px;background:#d8d8d8"></div>
<span id="t91" class="t " style="right:1041.9px;top:425.4px;font-size:11px;line-height:14px;color:#606060;">0.004</span>
<span id="t92" class="t " style="left:1762px;top:425.4px;font-size:11px;line-height:14px;color:#606060;">0.004</span>
<div class="b" style="left:893px;top:472px;width:854px;height:1px;background:#d8d8d8"></div>
<span id="t93" class="t " style="right:1041.9px;top:466.4px;font-size:11px;line-height:14px;color:#606060;">0.002</span>
<span id="t94" class="t " style="left:1762px;top:466.4px;font-size:11px;line-height:14px;color:#606060;">0.002</span>
<div class="b" style="left:893px;top:514px;width:854px;height:1px;background:#d8d8d8"></div>
<span id="t95" class="t " style="right:1041.9px;top:508.4px;font-size:11px;line-height:14px;color:#606060;">1E-3</span>
<span id="t96" class="t " style="left:1762px;top:508.4px;font-size:11px;line-height:14px;color:#606060;">1E-3</span>
<div class="b" style="left:893px;top:568px;width:854px;height:1px;background:#d8d8d8"></div>
<span id="t97" class="t " style="right:1041.9px;top:562.4px;font-size:11px;line-height:14px;color:#606060;">4E-4</span>
<span id="t98" class="t " style="left:1762px;top:562.4px;font-size:11px;line-height:14px;color:#606060;">4E-4</span>
<div class="b" style="left:893px;top:609px;width:854px;height:1px;background:#d8d8d8"></div>
<span id="t99" class="t " style="right:1041.9px;top:603.4px;font-size:11px;line-height:14px;color:#606060;">2E-4</span>
<span id="t100" class="t " style="left:1762px;top:603.4px;font-size:11px;line-height:14px;color:#606060;">2E-4</span>
<div class="b" style="left:893px;top:651px;width:854px;height:1px;background:#d8d8d8"></div>
<span id="t101" class="t " style="right:1041.9px;top:645.4px;font-size:11px;line-height:14px;color:#606060;">1E-4</span>
<span id="t102" class="t " style="left:1762px;top:645.4px;font-size:11px;line-height:14px;color:#606060;">1E-4</span>
<div class="b" style="left:893px;top:705px;width:854px;height:1px;background:#d8d8d8"></div>
<span id="t103" class="t " style="right:1041.9px;top:699.4px;font-size:11px;line-height:14px;color:#606060;">4E-5</span>
<span id="t104" class="t " style="left:1762px;top:699.4px;font-size:11px;line-height:14px;color:#606060;">4E-5</span>
<div class="b" style="left:893px;top:747px;width:854px;height:1px;background:#d8d8d8"></div>
<span id="t105" class="t " style="right:1041.9px;top:741.4px;font-size:11px;line-height:14px;color:#606060;">2E-5</span>
<span id="t106" class="t " style="left:1762px;top:741.4px;font-size:11px;line-height:14px;color:#606060;">2E-5</span>
<div class="b" style="left:893px;top:788px;width:854px;height:1px;background:#d8d8d8"></div>
<span id="t107" class="t " style="right:1041.9px;top:782.4px;font-size:11px;line-height:14px;color:#606060;">1E-5</span>
<span id="t108" class="t " style="left:1762px;top:782.4px;font-size:11px;line-height:14px;color:#606060;">1E-5</span>
<div class="b" style="left:893px;top:842px;width:854px;height:1px;background:#d8d8d8"></div>
<span id="t109" class="t " style="right:1041.9px;top:836.4px;font-size:11px;line-height:14px;color:#606060;">4E-6</span>
<span id="t110" class="t " style="left:1762px;top:836.4px;font-size:11px;line-height:14px;color:#606060;">4E-6</span>
<div class="b" style="left:893px;top:884px;width:854px;height:1px;background:#d8d8d8"></div>
<span id="t111" class="t " style="right:1041.9px;top:878.4px;font-size:11px;line-height:14px;color:#606060;">2E-6</span>
<span id="t112" class="t " style="left:1762px;top:878.4px;font-size:11px;line-height:14px;color:#606060;">2E-6</span>
<div class="b" style="left:893px;top:925px;width:854px;height:1px;background:#c0d0e0"></div>
<span id="t113" class="t " style="right:1041.9px;top:919.4px;font-size:11px;line-height:14px;color:#606060;">1E-6</span>
<span id="t114" class="t " style="left:1762px;top:919.4px;font-size:11px;line-height:14px;color:#606060;">1E-6</span>
<div class="b" style="left:898px;top:926px;width:1px;height:9px;background:#c0d0e0"></div>
<span id="t115" class="t " style="left:898.8px;transform:translateX(-50%);top:933.3px;font-size:11px;line-height:14px;color:#606060;">0</span>
<div class="b" style="left:998px;top:926px;width:1px;height:9px;background:#c0d0e0"></div>
<span id="t116" class="t " style="left:998.8px;transform:translateX(-50%);top:933.3px;font-size:11px;line-height:14px;color:#606060;">100</span>
<div class="b" style="left:1098px;top:926px;width:1px;height:9px;background:#c0d0e0"></div>
<span id="t117" class="t " style="left:1098.8px;transform:translateX(-50%);top:933.3px;font-size:11px;line-height:14px;color:#606060;">200</span>
<div class="b" style="left:1198px;top:926px;width:1px;height:9px;background:#c0d0e0"></div>
<span id="t118" class="t " style="left:1198.8px;transform:translateX(-50%);top:933.3px;font-size:11px;line-height:14px;color:#606060;">300</span>
<div class="b" style="left:1298px;top:926px;width:1px;height:9px;background:#c0d0e0"></div>
<span id="t119" class="t " style="left:1298.8px;transform:translateX(-50%);top:933.3px;font-size:11px;line-height:14px;color:#606060;">400</span>
<div class="b" style="left:1399px;top:926px;width:1px;height:9px;background:#c0d0e0"></div>
<span id="t120" class="t " style="left:1399.8px;transform:translateX(-50%);top:933.3px;font-size:11px;line-height:14px;color:#606060;">500</span>
<div class="b" style="left:1499px;top:926px;width:1px;height:9px;background:#c0d0e0"></div>
<span id="t121" class="t " style="left:1499.8px;transform:translateX(-50%);top:933.3px;font-size:11px;line-height:14px;color:#606060;">600</span>
<div class="b" style="left:1599px;top:926px;width:1px;height:9px;background:#c0d0e0"></div>
<span id="t122" class="t " style="left:1599.8px;transform:translateX(-50%);top:933.3px;font-size:11px;line-height:14px;color:#606060;">700</span>
<div class="b" style="left:1699px;top:926px;width:1px;height:9px;background:#c0d0e0"></div>
<span id="t123" class="t " style="left:1699.8px;transform:translateX(-50%);top:933.3px;font-size:11px;line-height:14px;color:#606060;">800</span>
<span id="t124" class="t " style="left:1320px;transform:translateX(-50%);top:951px;font-size:12px;line-height:14px;color:#707070;">Time</span>
<span class="t" style="left:836px;top:493px;font-size:12px;line-height:14px;color:#707070;transform:translate(-50%,-50%) rotate(-90deg)">Residual</span>
<span class="t" style="left:1804px;top:493px;font-size:12px;line-height:14px;color:#707070;transform:translate(-50%,-50%) rotate(90deg)">Residual</span>
<svg style="left:0;top:0" width="1920" height="990" viewBox="0 0 1920 990"><polyline points="901.4,214 901.9,258 904.6,257 906.1,233 940.3,450 974.2,493.1 1008.2,581.3 1043.3,636 1079.4,669.1 1115.5,702.2 1152.7,720.4 1189.6,721.5 1228.5,710.2 1267.3,706.5 1305.5,709.6 1345.5,714.9 1739,848.2" fill="none" stroke="#cc0000" stroke-width="2" stroke-linejoin="round" stroke-linecap="round"/><polyline points="901.4,168 903,190 904.5,205 906,214 928,295 940.4,340 974.2,404.5 1008.2,490.5 1043.3,532.9 1079.5,555.2 1115.5,584.5 1152.5,609.6 1189.6,603 1228.5,587.1 1267.3,581.5 1305.5,582.9 1345.5,586.9 1739,787.6" fill="none" stroke="#00cc00" stroke-width="2" stroke-linejoin="round" stroke-linecap="round"/><polyline points="903,152 904.3,203 905.5,180.3 906.6,216 908,228 925.3,295 940.4,356 974.5,449 1008.2,536.4 1043.3,580.4 1079.5,605.1 1115.5,633.3 1152.5,656.7 1189.6,651.6 1228.8,638 1267.3,634 1305.5,636 1345.5,640.9 1739,795.1" fill="none" stroke="#0000cc" stroke-width="2" stroke-linejoin="round" stroke-linecap="round"/><polyline points="901.3,123 902.2,283.6 903.6,255.5 905.3,258 906,230 907.8,226.2 940.5,243.6 974.5,305.8 1008.2,428.7 1043.3,483.3 1080,512.7 1115.5,541 1152.5,578.7 1189.6,586.7 1229,577.8 1267.3,574 1305.5,579.1 1345.5,583.6 1739,809.5" fill="none" stroke="#cccc00" stroke-width="2" stroke-linejoin="round" stroke-linecap="round"/><polyline points="901.4,160 903.2,219.5 905.5,218 907,232 923.5,295 940.4,358 974.2,482.7 1008.2,556.9 1043.3,605.1 1079.4,643.9 1115.5,682.7 1152.7,682.4 1189.6,666.4 1228.5,656.7 1267.3,660.4 1305.5,675.5 1345.5,690.9 1739,788.2" fill="none" stroke="#00cccc" stroke-width="2" stroke-linejoin="round" stroke-linecap="round"/><polyline points="901.3,657.8 902.4,694.5 903.1,708.2 906.4,720.9 940.5,765.1 974.5,785.5 1008.2,788.2 1043.3,786.4 1079.1,792.7 1115.6,790.6 1152.3,792.8 1189.4,788.4 1228.5,791.8 1266.9,795.2 1306.3,789.4 1345.3,795.5 1739,789.1" fill="none" stroke="#c2bc00" stroke-width="2" stroke-linejoin="round" stroke-linecap="round"/><path d="M1809,174.9 H1825" stroke="#cc0000" stroke-width="2" fill="none"/><circle cx="1817" cy="174.9" r="4" fill="#cc0000"/><path d="M1809,188.9 H1825" stroke="#00cc00" stroke-width="2" fill="none"/><path d="M1817,184.9 l4,4 l-4,4 l-4,-4 Z" fill="#00cc00"/><path d="M1809,202.9 H1825" stroke="#0000cc" stroke-width="2" fill="none"/><rect x="1813" y="198.9" width="8" height="8" fill="#0000cc"/><path d="M1809,216.9 H1825" stroke="#cccc00" stroke-width="2" fill="none"/><path d="M1817,212.9 l4,8 h-8 Z" fill="#cccc00"/><path d="M1809,230.9 H1825" stroke="#00cccc" stroke-width="2" fill="none"/><path d="M1813,226.9 h8 l-4,8 Z" fill="#00cccc"/><path d="M1809,244.9 H1825" stroke="#c2bc00" stroke-width="2" fill="none"/><circle cx="1817" cy="244.9" r="4" fill="#c2bc00"/><path d="M1869.3,67.5 H1883.3" stroke="#555" stroke-width="3" stroke-linecap="round" fill="none"/><path d="M1869.3,72.5 H1883.3" stroke="#555" stroke-width="3" stroke-linecap="round" fill="none"/><path d="M1869.3,77.5 H1883.3" stroke="#555" stroke-width="3" stroke-linecap="round" fill="none"/></svg>
<span id="t125" class="t " style="left:1830px;top:167.6px;font-size:12px;line-height:14px;color:#333;font-weight:bold;">Ux</span>
<span id="t126" class="t " style="left:1830px;top:181.6px;font-size:12px;line-height:14px;color:#333;font-weight:bold;">Uy</span>
<span id="t127" class="t " style="left:1830px;top:195.6px;font-size:12px;line-height:14px;color:#333;font-weight:bold;">Uz</span>
<span id="t128" class="t " style="left:1830px;top:209.6px;font-size:12px;line-height:14px;color:#333;font-weight:bold;">p</span>
<span id="t129" class="t " style="left:1830px;top:223.6px;font-size:12px;line-height:14px;color:#333;font-weight:bold;">k</span>
<span id="t130" class="t " style="left:1830px;top:237.6px;font-size:12px;line-height:14px;color:#333;font-weight:bold;">omega</span>
<div class="b" style="left:1753px;top:958px;width:137px;height:34px;background:#015c9c;border-radius:3px 3px 0 0;border-top:1px solid #0867ab"></div>
<svg style="left:1763px;top:967px" width="24" height="17" viewBox="0 0 24 17">
<ellipse cx="11.7" cy="7.5" rx="11.7" ry="7.5" fill="#fff"/><path d="M17,12 L23,16.3 L13,14.5 Z" fill="#fff"/>
<g transform="rotate(-4 12 8)"><path d="M5.4,4.2 H8.8 L9.8,2.9 H13.8 L14.8,4.2 H18.9 V12.6 H5.4 Z" fill="#015c9c"/><circle cx="12" cy="8.3" r="2.4" fill="none" stroke="#fff" stroke-width="1.5"/></g></svg>
<span id="t131" class="t " style="left:1796.66px;top:967px;font-size:12.2px;line-height:16px;color:#fff;transform:scaleX(0.9832);transform-origin:0 50%;">Report an issue</span>
</body></html>
